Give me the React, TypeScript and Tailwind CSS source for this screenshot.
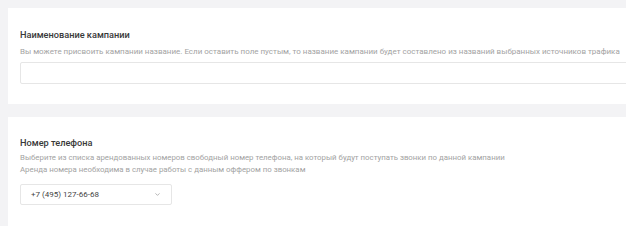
import { ChevronDown } from "lucide-react";

export default function App() {
  return (
    <div className="flex h-[226px] w-[628px] overflow-hidden bg-white font-['Roboto',sans-serif]">
      <div className="flex w-[626px] flex-col bg-[#f3f3f5] pl-2 pt-2">
        <section className="h-[96px] overflow-hidden bg-white pl-3 pt-[21px]">
          <h2 className="text-[9.2px] font-medium leading-[12px] text-[#383838]">
            Наименование кампании
          </h2>
          <p className="mt-[6px] whitespace-nowrap text-[8px] leading-[10px] text-[#a3a3a3]">
            Вы можете присвоить кампании название. Если оставить поле пустым, то название кампании будет составлено из названий выбранных источников трафика
          </p>
          <input
            type="text"
            className="mt-[5px] h-[22px] w-[640px] rounded-[2px] border border-[#e6e6e6] bg-white px-2 text-[8px] outline-none"
          />
        </section>

        <section className="mt-[13px] flex-1 bg-white pl-3 pt-5">
          <h2 className="text-[9.2px] font-medium leading-[12px] text-[#383838]">
            Номер телефона
          </h2>
          <p className="mt-[3px] text-[7.85px] leading-[12px] text-[#a3a3a3]">
            Выберите из списка арендованных номеров свободный номер телефона, на который будут поступать звонки по данной кампании
            <br />
            Аренда номера необходима в случае работы с данным оффером по звонкам
          </p>
          <button
            type="button"
            className="mt-2 flex h-[21px] w-[152px] items-center justify-between rounded-[2px] border border-[#e6e6e6] bg-white pl-[10px] pr-[10px] text-[8px] text-[#444]"
          >
            <span>+7 (495) 127-66-68</span>
            <ChevronDown className="h-[7px] w-[7px] text-[#999]" strokeWidth={2.5} />
          </button>
        </section>
      </div>
    </div>
  );
}
